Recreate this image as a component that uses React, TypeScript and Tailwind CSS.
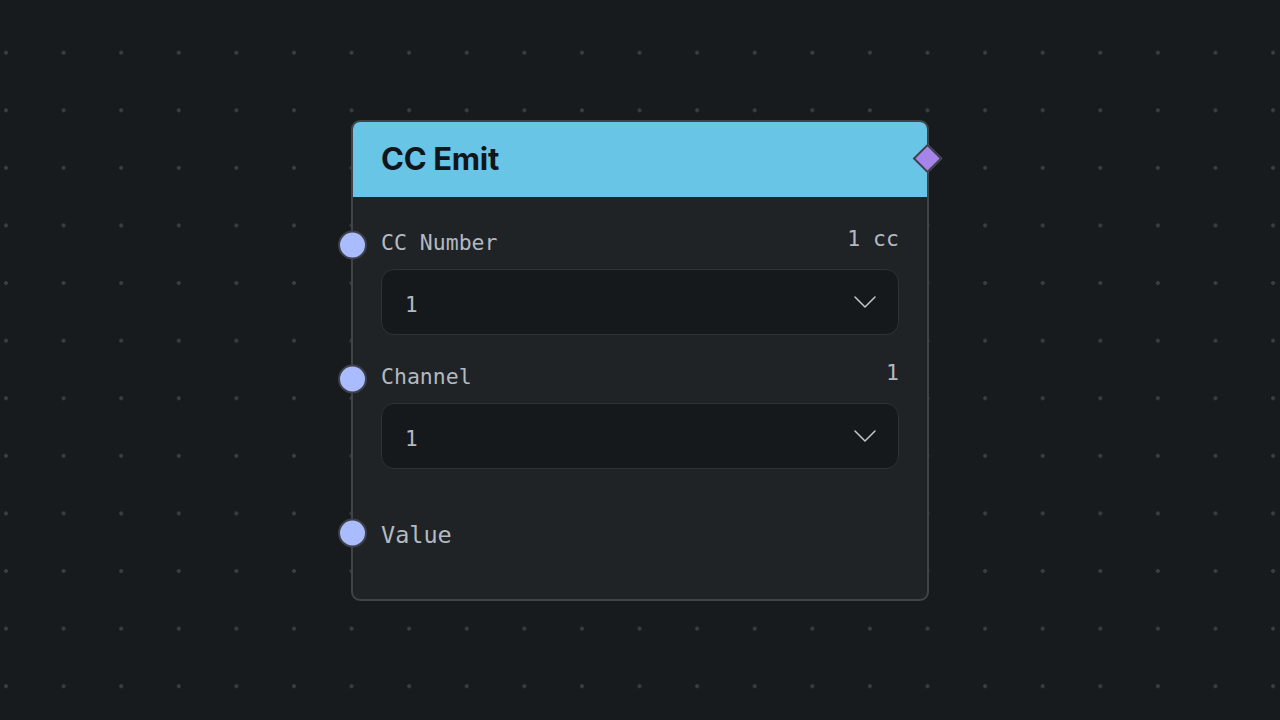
import React from 'react';

interface FieldProps {
  label: string;
  value: string;
  selected: string;
}

function Handle() {
  return (
    <div className="absolute left-[-43px] top-1/2 -translate-y-1/2 w-[29px] h-[29px] rounded-full bg-[#a8bcff] border-2 border-[#3e4248]" />
  );
}

function Chevron() {
  return (
    <svg width="24" height="14" viewBox="0 0 24 14" fill="none">
      <path d="M2 2 L12 12 L22 2" stroke="#c3c7cd" strokeWidth="1.5" strokeLinecap="round" strokeLinejoin="round" />
    </svg>
  );
}

function Field({ label, value, selected }: FieldProps) {
  return (
    <div>
      <div className="relative flex items-center justify-between h-[28px]">
        <Handle />
        <span className="text-[21.5px] text-[#b3b9c1] mb-[4px]">{label}</span>
        <span className="text-[21.5px] text-[#b3b9c1] mb-[12px]">{value}</span>
      </div>
      <div className="mt-[10px] h-[66px] rounded-[13px] bg-[#16191c] border border-[#2e3237] flex items-center justify-between pl-[23px] pr-[21px]">
        <span className="text-[21px] text-[#b3b9c1] mt-[7px]">{selected}</span>
        <Chevron />
      </div>
    </div>
  );
}

export default function App() {
  return (
    <div className="relative w-[1280px] h-[720px] overflow-hidden bg-[#181b1e] bg-[radial-gradient(circle,#3a3e43_1.6px,transparent_2.2px)] bg-size-[57.6px_57.6px] bg-position-[-22.8px_23.9px] font-['DejaVu_Sans_Mono',monospace]">
      {/* Node */}
      <div className="absolute left-[351px] top-[120px] w-[578px] h-[481px] rounded-[9px] border-2 border-[#40444a] bg-[#202326]">
        <div className="h-[75px] rounded-t-[7px] bg-[#68c5e6] flex items-center pl-[28px]">
          <h1 className="font-['Inter',sans-serif] font-bold text-[31px] tracking-[-0.3px] text-[#12161a]">CC Emit</h1>
        </div>
        {/* output handle */}
        <div className="absolute right-[-11px] top-[26px] w-[21px] h-[21px] rotate-45 bg-[#a784ea] border-2 border-[#3e4248]" />

        <div className="px-[28px] pt-[34px]">
          <Field label="CC Number" value="1 cc" selected="1" />
          <div className="mt-[30px]">
            <Field label="Channel" value="1" selected="1" />
          </div>
          <div className="relative mt-[50px] h-[28px] flex items-center">
            <Handle />
            <span className="text-[23.5px] text-[#b3b9c1] mt-[5px]">Value</span>
          </div>
        </div>
      </div>
    </div>
  );
}
